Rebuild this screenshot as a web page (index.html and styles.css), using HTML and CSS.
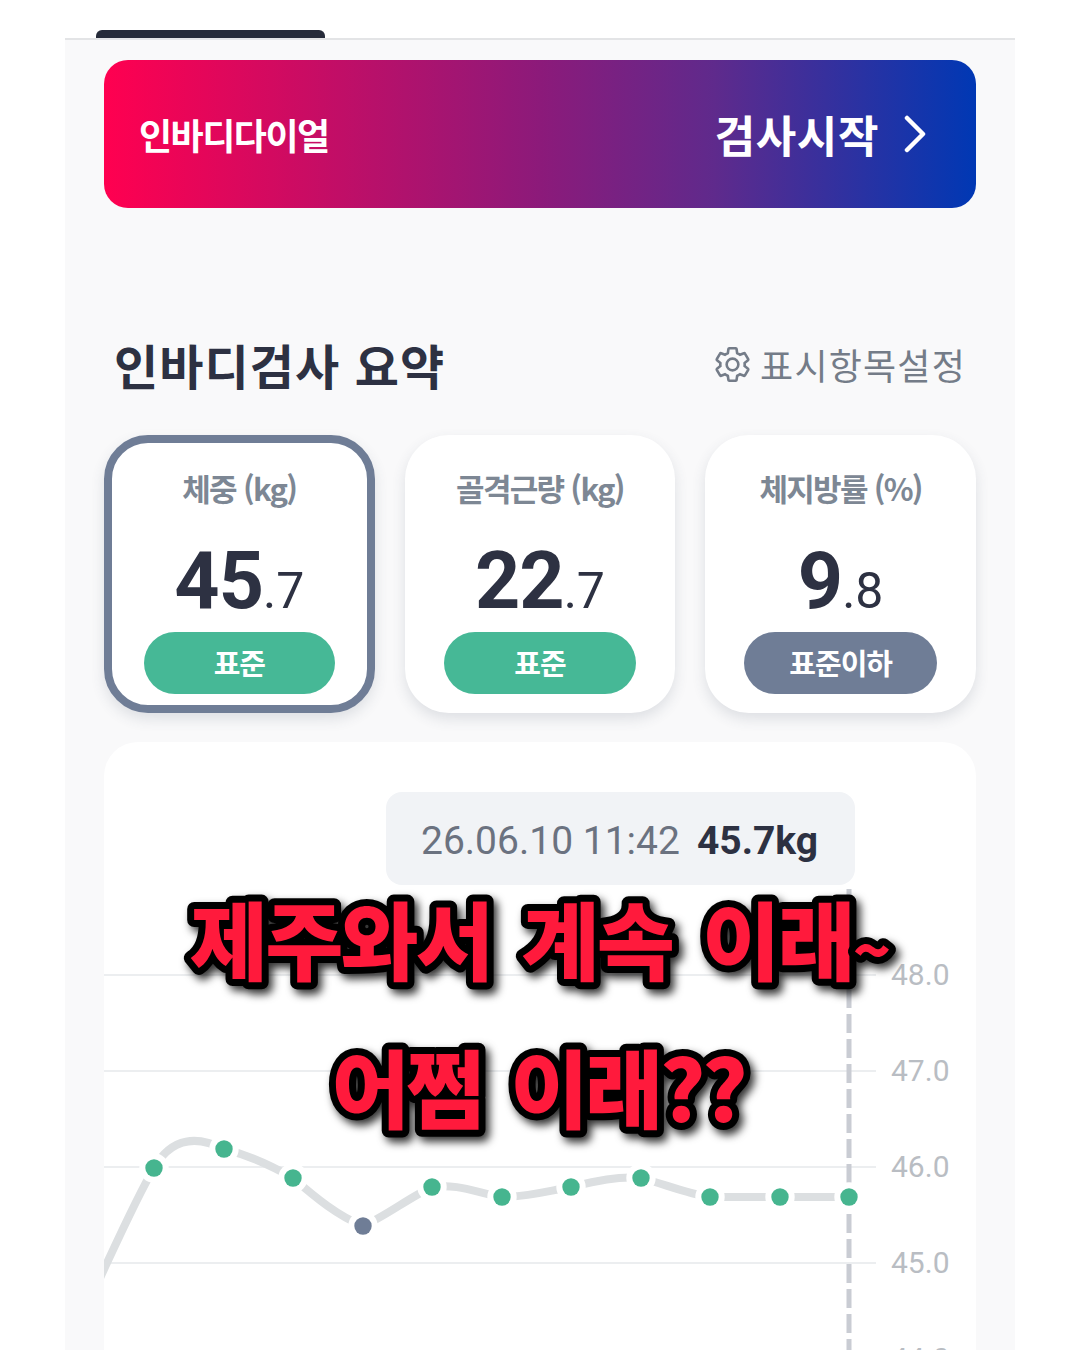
FILE: index.html
```html
<!DOCTYPE html>
<html lang="ko">
<head>
<meta charset="utf-8">
<title>인바디검사 요약</title>
<link rel="stylesheet" href="styles.css">
</head>
<body>
<div class="tabs"><div class="tab-active"></div></div>
<main class="screen">
  <section class="banner">
    <span class="banner-name">인바디다이얼</span>
    <span class="banner-action">검사시작
      <svg class="chevron" viewBox="0 0 22 38" aria-hidden="true"><path d="M3 3l16 16L3 35"/></svg>
    </span>
  </section>

  <header class="summary-head">
    <h1 class="summary-title">인바디검사 요약</h1>
    <span class="settings">
      <svg class="gear" viewBox="0 0 24 24" aria-hidden="true"><path d="M19.43 12.98c.04-.32.07-.64.07-.98 0-.34-.03-.66-.07-.98l2.11-1.65c.19-.15.24-.42.12-.64l-2-3.46c-.12-.22-.39-.3-.61-.22l-2.49 1c-.52-.4-1.08-.73-1.69-.98l-.38-2.65C14.46 2.18 14.25 2 14 2h-4c-.25 0-.46.18-.49.42l-.38 2.65c-.61.25-1.17.59-1.69.98l-2.49-1c-.23-.09-.49 0-.61.22l-2 3.46c-.13.22-.07.49.12.64l2.11 1.65c-.04.32-.07.65-.07.98 0 .33.03.66.07.98l-2.11 1.65c-.19.15-.24.42-.12.64l2 3.46c.12.22.39.3.61.22l2.49-1c.52.4 1.08.73 1.69.98l.38 2.65c.03.24.24.42.49.42h4c.25 0 .46-.18.49-.42l.38-2.65c.61-.25 1.17-.59 1.69-.98l2.49 1c.23.09.49 0 .61-.22l2-3.46c.12-.22.07-.49-.12-.64l-2.11-1.65z"/><circle cx="12" cy="12" r="3.6"/></svg>
      표시항목설정
    </span>
  </header>

  <section class="cards">
    <article class="card card-selected">
      <div class="card-label">체중 (kg)</div>
      <div class="card-value"><b>45</b><span>.7</span></div>
      <div class="badge">표준</div>
    </article>
    <article class="card">
      <div class="card-label">골격근량 (kg)</div>
      <div class="card-value"><b>22</b><span>.7</span></div>
      <div class="badge">표준</div>
    </article>
    <article class="card">
      <div class="card-label">체지방률 (%)</div>
      <div class="card-value"><b>9</b><span>.8</span></div>
      <div class="badge badge-low">표준이하</div>
    </article>
  </section>

  <section class="chart">
    <div class="readout"><span class="readout-date">26.06.10 11:42</span><strong class="readout-value">45.7kg</strong></div>
    <svg class="plot" viewBox="104 885 872 465" aria-hidden="true">
      <g class="grid">
        <path d="M104 975H876"/><path d="M104 1071H876"/><path d="M104 1167H876"/><path d="M104 1263H876"/>
      </g>
      <g class="axis">
        <text x="891" y="985">48.0</text>
        <text x="891" y="1081">47.0</text>
        <text x="891" y="1177">46.0</text>
        <text x="891" y="1273">45.0</text>
        <text x="891" y="1369">44.0</text>
      </g>
      <path class="marker" d="M849 889V1350"/>
      <path class="trend" d="M100 1278C120 1235 138 1195 154 1168C172 1136 198 1136 224 1149C248 1155 272 1166 293 1178C316 1198 338 1216 363 1226C386 1216 410 1197 432 1187C458 1183 480 1194 502 1197C526 1197 548 1191 571 1187C596 1181 618 1176 641 1178C664 1184 688 1194 710 1197C734 1197 756 1197 780 1197C804 1197 826 1197 849 1197"/>
      <g class="dots">
        <circle cx="154" cy="1168" r="8.7"/><circle cx="224" cy="1149" r="8.7"/><circle cx="293" cy="1178" r="8.7"/>
        <circle class="dot-low" cx="363" cy="1226" r="8.7"/><circle cx="432" cy="1187" r="8.7"/><circle cx="502" cy="1197" r="8.7"/>
        <circle cx="571" cy="1187" r="8.7"/><circle cx="641" cy="1178" r="8.7"/><circle cx="710" cy="1197" r="8.7"/>
        <circle cx="780" cy="1197" r="8.7"/><circle cx="849" cy="1197" r="8.7"/>
      </g>
    </svg>
  </section>
</main>
<svg class="caption" viewBox="0 0 1080 300">
  <text class="caption-line caption-long" x="539" y="108">제주와서 계속 이래<tspan class="caption-tilde">~</tspan></text>
  <text class="caption-line" x="538" y="256">어쩜 이래??</text>
</svg>
</body>
</html>
```
FILE: styles.css
```css
* { box-sizing: border-box; }
html, body { margin: 0; height: 1350px; overflow: hidden; background: #fff; }
body { font-family: "Noto Sans CJK KR", "Noto Sans", sans-serif; position: relative; }

.tabs { height: 40px; margin: 0 65px; padding: 30px 0 0 31px; border-bottom: 2px solid #e3e4e6; }
.tab-active { width: 229px; height: 8px; background: #262b3a; border-radius: 6px 6px 0 0; }

.screen { margin: 0 65px; height: 1310px; padding: 20px 39px 0; background: #f9f9fa; overflow: hidden; }

.banner {
  height: 148px; padding: 0 50px 0 35px; border-radius: 24px;
  display: flex; align-items: center; justify-content: space-between; color: #fff;
  background: linear-gradient(90deg, #ff0050 0%, #8c1a7a 50%, #5f2a8c 70%, #0038b4 100%);
}
.banner-name { font-size: 36px; font-weight: 700; letter-spacing: -1.5px; }
.banner-action { font-size: 44px; font-weight: 700; letter-spacing: 0.6px; display: flex; align-items: center; gap: 25px; }
.chevron { width: 22px; height: 38px; fill: none; stroke: #fff; stroke-width: 4.5; stroke-linecap: round; stroke-linejoin: round; }

.summary-head { display: flex; align-items: center; justify-content: space-between; height: 76px; margin-top: 118px; padding: 0 10px 0 10px; }
.summary-title { margin: 0; font-size: 48px; font-weight: 700; color: #2d3142; letter-spacing: 1.1px; }
.settings { display: flex; align-items: center; gap: 8px; font-size: 36px; color: #747c88; letter-spacing: 1.2px; }
.gear { width: 39px; height: 39px; fill: none; stroke: #747c88; stroke-width: 1.6; stroke-linejoin: round; }

.cards { display: grid; grid-template-columns: repeat(3, 1fr); gap: 30px; margin-top: 33px; }
.card {
  height: 278px; padding: 28px 39px 0; border-radius: 44px; background: #fff;
  box-shadow: 0 6px 14px rgba(60, 70, 90, .14);
  display: flex; flex-direction: column; align-items: center;
}
.card-selected { border: 8px solid #6f7d96; padding: 20px 32px 0; }
.card-label { height: 50px; line-height: 50px; font-size: 31px; font-weight: 700; color: #7d8794; letter-spacing: -1.7px; white-space: nowrap; }
.card-value { height: 107px; margin-top: 15px; line-height: 107px; font-family: Roboto, sans-serif; color: #2d3142; white-space: nowrap; }
.card-value b { font-size: 79px; font-weight: 700; letter-spacing: -1px; }
.card-value span { font-size: 50px; font-weight: 400; }
.badge {
  width: 100%; height: 62px; margin-top: -3px; border-radius: 31px; background: #46b896; color: #fff;
  font-size: 29px; font-weight: 700; line-height: 60px; text-align: center; letter-spacing: -1px;
}
.card .badge-low { background: #6f7d96; }

.chart { margin-top: 29px; height: 640px; padding-top: 50px; border-radius: 34px 34px 0 0; background: #fff; }
.readout {
  width: 469px; height: 93px; margin-left: 282px; padding: 5px 0 0 35px; border-radius: 16px; background: #f1f3f6;
  display: flex; align-items: center; gap: 17px; font-family: Roboto, sans-serif; font-size: 39px; white-space: nowrap;
}
.readout-date { color: #6b7280; }
.readout-value { color: #2d3142; font-weight: 700; }
.plot { display: block; width: 872px; height: 465px; overflow: hidden; }
.grid path { stroke: #eceef0; stroke-width: 2; fill: none; }
.axis text { font-family: Roboto, sans-serif; font-size: 30px; fill: #b9bdc3; }
.marker { stroke: #c9ccd3; stroke-width: 5; stroke-dasharray: 19 6; fill: none; }
.trend { stroke: #dcdfe1; stroke-width: 8; fill: none; }
.dots circle { fill: #46b58f; stroke: #fff; stroke-width: 12; paint-order: stroke; }
.dots .dot-low { fill: #6f7d96; }

.caption { position: absolute; left: 0; top: 866px; width: 1080px; height: 300px; overflow: visible; filter: drop-shadow(4px 5px 4px rgba(0, 0, 0, .8)); }
.caption-line {
  font-size: 85px; font-weight: 900; letter-spacing: -3.5px; word-spacing: 9px; text-anchor: middle;
  fill: #ff1a3c; stroke: #000; stroke-width: 14px; stroke-linejoin: round; paint-order: stroke fill;
}
.caption-long { letter-spacing: -2.8px; }
.caption-tilde { font-size: 62px; }
```
